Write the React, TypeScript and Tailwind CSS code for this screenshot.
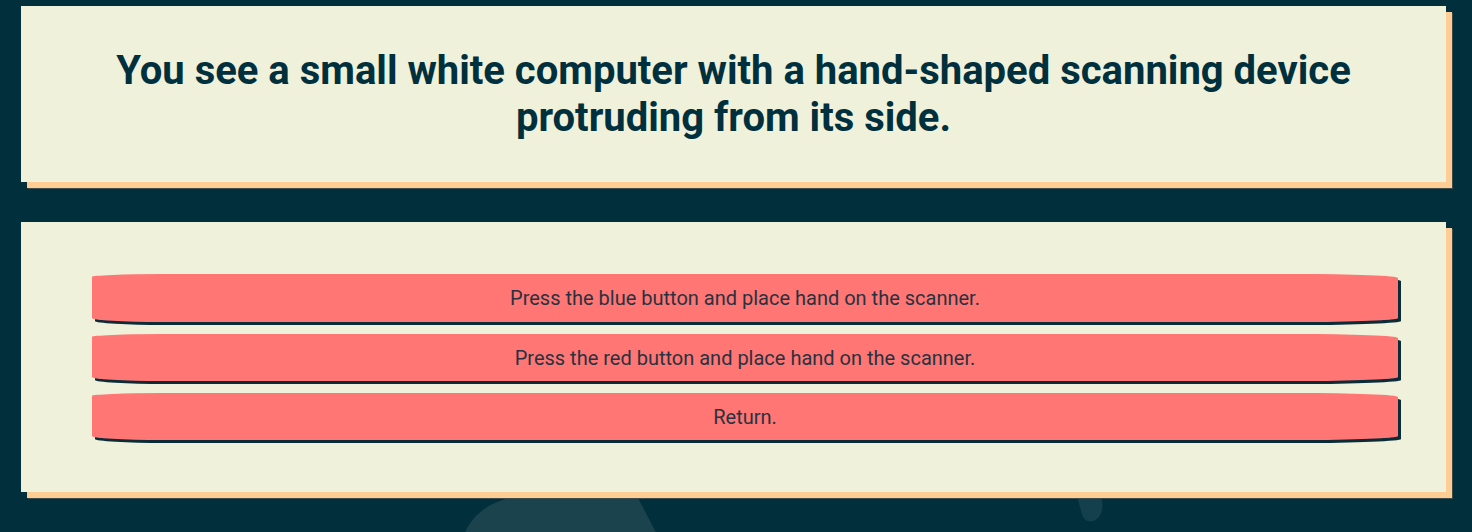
const options = [
  "Press the blue button and place hand on the scanner.",
  "Press the red button and place hand on the scanner.",
  "Return.",
];

function Blobs() {
  return (
    <svg
      className="pointer-events-none absolute left-0 top-0"
      width="1472"
      height="532"
      viewBox="0 0 1472 532"
    >
      <path
        d="M462 540 C470 515 490 500 520 496 L636 494 L660 540 Z"
        fill="#1a434d"
      />
      <path
        d="M1078 500 C1076 490 1090 486 1098 492 C1104 498 1104 512 1098 518 C1092 524 1084 522 1082 514 Z"
        fill="#143f4d"
      />
    </svg>
  );
}

export default function App() {
  return (
    <div className="relative min-h-[532px] w-full overflow-hidden bg-[#012f3c] font-['Roboto',sans-serif]">
      <Blobs />
      <div className="relative flex flex-col">
        <div className="ml-[21px] mt-[6px] w-[1425px] bg-[#f0f1da] py-[41px] shadow-[6px_6px_0_#fecd94,7px_7px_0_#3c4d4c]">
          <h1 className="px-8 text-center text-[40px] font-bold leading-[47px] text-[#00303d]">
            You see a small white computer with a hand-shaped scanning device
            <br />
            protruding from its side.
          </h1>
        </div>

        <div className="ml-[21px] mt-[40px] flex h-[270px] w-[1425px] flex-col gap-[12px] bg-[#f0f1da] pb-[50px] pl-[71px] pr-[48px] pt-[52px] shadow-[6px_6px_0_#fecd94,7px_7px_0_#3c4d4c]">
          {options.map((label, i) => (
            <button
              key={label}
              className={`flex w-full items-center justify-center rounded-[70px_100px_100px_70px/3px_4px_4px_4px] bg-[#ff7675] text-[20px] text-[#28323f] shadow-[3px_3px_0_#0b2b36] ${
                i === 0 ? "h-[48px]" : "h-[47px]"
              }`}
            >
              {label}
            </button>
          ))}
        </div>
      </div>
    </div>
  );
}
